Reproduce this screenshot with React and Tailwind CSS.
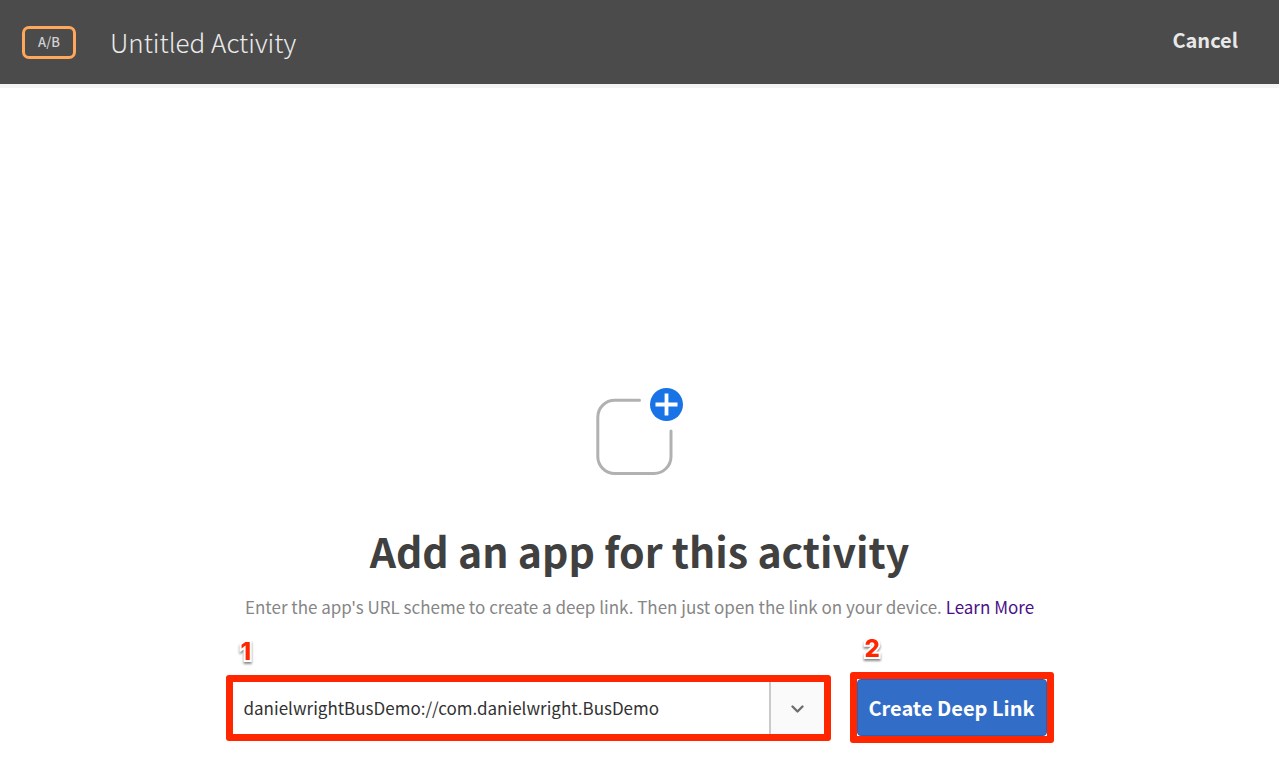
const marker =
  'absolute bottom-full left-2 mb-4 font-["Inter",sans-serif] text-2xl leading-7 font-extrabold text-[#ff2600] [paint-order:stroke_fill] [-webkit-text-stroke:4px_white] [filter:drop-shadow(0_2px_1px_rgba(0,0,0,0.45))]';

function AppIcon() {
  return (
    <svg className="h-[88px] w-[88px]" viewBox="0 0 88 88" fill="none" aria-hidden="true">
      <path
        d="M43.5 12.2H19A17 17 0 0 0 1.8 29.2V68.5A17 17 0 0 0 19 85.5H58A17 17 0 0 0 75 68.5V43"
        stroke="#b1b1b1"
        strokeWidth="3"
        strokeLinecap="round"
      />
      <circle cx="70.5" cy="16.5" r="16.5" fill="#1773e6" />
      <path d="M59.5 16.5H81.5M70.5 5.5V27.5" stroke="white" strokeWidth="3.8" />
    </svg>
  );
}

export default function App() {
  return (
    <div className='min-h-screen bg-white font-["Noto_Sans_CJK_SC",sans-serif]'>
      <header className="flex h-[88px] items-center justify-between border-b-4 border-[#f4f4f4] bg-[#4b4b4b] pr-[41px] pl-[22px]">
        <div className="flex items-center gap-[34px]">
          <span className="flex h-[33px] w-[54px] items-center justify-center rounded-[7px] border-3 border-[#ffa75a] text-[13px] font-medium text-[#d0d0d0]">
            A/B
          </span>
          <h1 className="text-[26px] leading-9 font-light text-[#ebebeb]">Untitled Activity</h1>
        </div>
        <button type="button" className="pb-1 text-xl leading-7 font-bold text-[#e8e8e8]">
          Cancel
        </button>
      </header>

      <main className="flex flex-col items-center px-6 pt-[300px] pb-8">
        <AppIcon />
        <h2 className="mt-11 text-center text-[41px] leading-[60px] font-bold text-[#404040]">
          Add an app for this activity
        </h2>
        <p className="mt-[13px] text-center text-[17px] leading-7 text-[#868686]">
          Enter the app's URL scheme to create a deep link. Then just open the link on your device.{" "}
          <a href="#learn-more" className="text-[#4b1088]">
            Learn More
          </a>
        </p>

        <form className="mt-[51px] flex w-full max-w-[828px] items-center gap-[19px]">
          <div className="relative flex h-[66px] min-w-0 flex-1 rounded-[3px] border-7 border-[#ff2600]">
            <span className={marker}>1</span>
            <input
              type="text"
              aria-label="App URL scheme"
              defaultValue="danielwrightBusDemo://com.danielwright.BusDemo"
              className="min-w-0 flex-1 bg-white px-[11px] text-[17px] text-[#323232] outline-none"
            />
            <button
              type="button"
              aria-label="Show URL schemes"
              className="flex w-[55px] items-center justify-center border-l-2 border-[#cacaca] bg-[#fafafa]"
            >
              <svg className="h-3 w-4" viewBox="0 0 16 12" fill="none" aria-hidden="true">
                <path
                  d="M3.5 4.5L8.5 9.5L13.5 4.5"
                  stroke="#6e6e6e"
                  strokeWidth="2.4"
                  strokeLinecap="round"
                  strokeLinejoin="round"
                />
              </svg>
            </button>
          </div>
          <div className="relative h-[71px] w-[204px] shrink-0 rounded-[3px] border-7 border-[#ff2600] bg-white">
            <span className={marker}>2</span>
            <button
              type="button"
              className="h-full w-full rounded-[4px] border border-[#285fb8] bg-[#326ec8] text-xl font-bold whitespace-nowrap text-white"
            >
              Create Deep Link
            </button>
          </div>
        </form>
      </main>
    </div>
  );
}
